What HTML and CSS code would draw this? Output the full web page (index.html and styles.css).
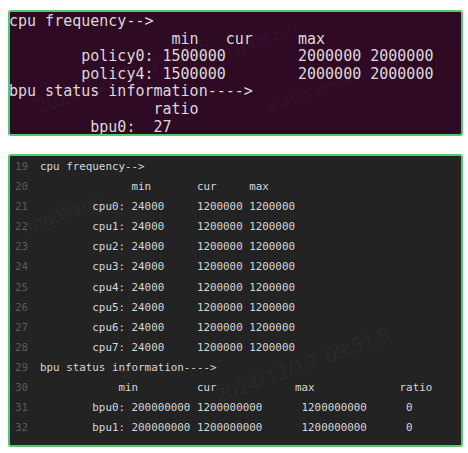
FILE: index.html
```html
<!DOCTYPE html>
<html>
<head>
<meta charset="utf-8">
<link rel="stylesheet" href="styles.css">
</head>
<body>
<div class="page">
  <div class="term">
<pre class="term-text">cpu frequency--&gt;
                  min   cur     max
        policy0: 1500000        2000000 2000000
        policy4: 1500000        2000000 2000000
bpu status information----&gt;
                ratio
         bpu0:  27</pre>
    <span class="wm wm-a">2024/12/19&nbsp;&nbsp;09:51:5</span>
    <span class="wm wm-b">张律恒(Constantine)@</span>
    <span class="wm wm-c">地平线集团 2517</span>
  </div>

  <div class="code">
    <div class="lines">
      <div class="ln"><span class="num">19</span><span class="src">cpu frequency--&gt;</span></div>
      <div class="ln"><span class="num">20</span><span class="src">              min       cur     max</span></div>
      <div class="ln"><span class="num">21</span><span class="src">        cpu0: 24000     1200000 1200000</span></div>
      <div class="ln"><span class="num">22</span><span class="src">        cpu1: 24000     1200000 1200000</span></div>
      <div class="ln"><span class="num">23</span><span class="src">        cpu2: 24000     1200000 1200000</span></div>
      <div class="ln"><span class="num">24</span><span class="src">        cpu3: 24000     1200000 1200000</span></div>
      <div class="ln"><span class="num">25</span><span class="src">        cpu4: 24000     1200000 1200000</span></div>
      <div class="ln"><span class="num">26</span><span class="src">        cpu5: 24000     1200000 1200000</span></div>
      <div class="ln"><span class="num">27</span><span class="src">        cpu6: 24000     1200000 1200000</span></div>
      <div class="ln"><span class="num">28</span><span class="src">        cpu7: 24000     1200000 1200000</span></div>
      <div class="ln"><span class="num">29</span><span class="src">bpu status information----&gt;</span></div>
      <div class="ln"><span class="num">30</span><span class="src">            min         cur            max             ratio</span></div>
      <div class="ln"><span class="num">31</span><span class="src">        bpu0: 200000000 1200000000      1200000000      0</span></div>
      <div class="ln"><span class="num">32</span><span class="src">        bpu1: 200000000 1200000000      1200000000      0</span></div>
    </div>
    <span class="wm wm-d">2024/12/19&nbsp;&nbsp;09:51:5</span>
    <span class="wm wm-e">ang.Wang</span>
  </div>
</div>
</body>
</html>
```

FILE: styles.css
```css
html, body {
  margin: 0;
  padding: 0;
  background: #ffffff;
}

.page {
  padding: 10px 5px 0 8px;
  display: flex;
  flex-direction: column;
  gap: 18px;
}

.term {
  position: relative;
  height: 122px;
  background: #2e0a24;
  border: 2px solid #52c774;
  border-radius: 3px;
  overflow: hidden;
}

.term-text {
  margin: 1px 0 0 -1px;
  font-family: "DejaVu Sans Mono", monospace;
  font-size: 15px;
  line-height: 17.6px;
  color: #ded6da;
  white-space: pre;
}

.code {
  position: relative;
  background: #232323;
  border: 2px solid #52c774;
  border-radius: 3px;
  overflow: hidden;
  padding: 0 0 7px 0;
}

.lines {
  margin-top: 1px;
  display: flex;
  flex-direction: column;
}

.ln {
  display: flex;
  height: 20.1px;
  line-height: 20.1px;
  font-family: "DejaVu Sans Mono", monospace;
  font-size: 10.86px;
  white-space: pre;
}

.num {
  width: 30px;
  padding-left: 5px;
  box-sizing: border-box;
  color: #5a5a5a;
}

.src {
  color: #d6d6d6;
}

.wm {
  position: absolute;
  font-family: "Noto Sans", "Noto Sans CJK SC", sans-serif;
  color: rgba(255, 255, 255, 0.05);
  white-space: nowrap;
  transform: rotate(-20deg);
  pointer-events: none;
}

.wm-a {
  left: 20px;
  top: 50px;
  font-size: 20px;
}

.wm-b {
  left: 250px;
  top: 62px;
  font-size: 14px;
}

.wm-c {
  left: 200px;
  top: 22px;
  font-size: 12px;
}

.wm-d {
  left: 200px;
  top: 195px;
  font-size: 20px;
}

.wm-e {
  left: 10px;
  top: 45px;
  font-size: 18px;
}
```
